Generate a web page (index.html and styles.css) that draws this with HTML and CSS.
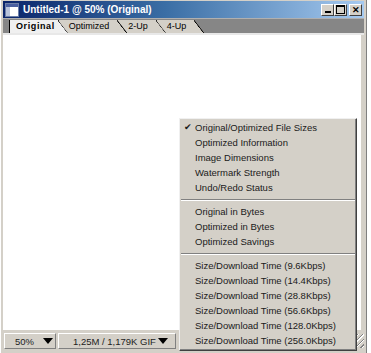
FILE: index.html
```html
<!DOCTYPE html>
<html lang="en">
<head>
    <meta charset="UTF-8">
    <title>Untitled-1 @ 50% (Original)</title>
    <link rel="stylesheet" href="styles.css">
</head>
<body>
    <div class="window">
        <div class="titlebar">
            <svg class="doc-icon" width="14" height="14" viewBox="0 0 14 14">
                <rect x="0.5" y="0.5" width="13" height="13" fill="#fff" stroke="#6d7fa8"/>
                <rect x="1" y="1" width="12" height="3" fill="#4a5fa0"/>
                <rect x="1" y="4" width="4" height="9" fill="#b9c4dc"/>
            </svg>
            <span class="title">Untitled-1 @ 50% (Original)</span>
            <div class="caption-buttons">
                <button class="cap-btn"><span class="min"></span></button>
                <button class="cap-btn"><span class="max"></span></button>
                <button class="cap-btn close">&#x2715;</button>
            </div>
        </div>
        <div class="tabs">
            <div class="tab active">Original</div>
            <div class="tab t2">Optimized</div>
            <div class="tab t3">2-Up</div>
            <div class="tab t4">4-Up</div>
        </div>
        <div class="canvas"></div>
        <div class="statusbar">
            <div class="field zoom">50% <span class="arrow"></span></div>
            <div class="field size">1,25M / 1,179K GIF <span class="arrow"></span></div>
            <div class="grip"></div>
        </div>
    </div>

    <div class="menu">
        <div class="item checked">Original/Optimized File Sizes</div>
        <div class="item">Optimized Information</div>
        <div class="item">Image Dimensions</div>
        <div class="item">Watermark Strength</div>
        <div class="item">Undo/Redo Status</div>
        <div class="sep"></div>
        <div class="item">Original in Bytes</div>
        <div class="item">Optimized in Bytes</div>
        <div class="item">Optimized Savings</div>
        <div class="sep"></div>
        <div class="item">Size/Download Time (9.6Kbps)</div>
        <div class="item">Size/Download Time (14.4Kbps)</div>
        <div class="item">Size/Download Time (28.8Kbps)</div>
        <div class="item">Size/Download Time (56.6Kbps)</div>
        <div class="item">Size/Download Time (128.0Kbps)</div>
        <div class="item">Size/Download Time (256.0Kbps)</div>
    </div>
</body>
</html>
```
FILE: styles.css
```css
body {
    margin: 0;
    font-family: "Liberation Sans", Arial, sans-serif;
    font-size: 9px;
    background: #fff;
    width: 371px;
    height: 353px;
    overflow: hidden;
}
.window {
    width: 367px;
    height: 353px;
    box-sizing: border-box;
    background: #d4d0c8;
    border-left: 1px solid #fff;
    border-right: 1px solid #808080;
    padding: 1px 2px 0 2px;
    display: flex;
    flex-direction: column;
}
.titlebar {
    height: 17px;
    flex: none;
    display: flex;
    align-items: center;
    background: linear-gradient(to right, #0a246a 0%, #3a6ea5 45%, #a6caf0 100%);
    padding: 0 2px 0 2px;
}
.doc-icon {
    flex: none;
    margin-right: 4px;
}
.title {
    color: #fff;
    font-weight: bold;
    font-size: 10px;
    flex: 1;
}
.caption-buttons {
    display: flex;
}
.cap-btn {
    width: 13px;
    height: 12px;
    padding: 0;
    background: #d4d0c8;
    border: 1px solid;
    border-color: #fff #404040 #404040 #fff;
    font-size: 9px;
    font-weight: bold;
    line-height: 10px;
    color: #000;
    display: flex;
    align-items: flex-end;
    justify-content: center;
}
.cap-btn.close {
    margin-left: 2px;
    align-items: center;
}
.min {
    width: 6px;
    height: 2px;
    background: #000;
    margin-bottom: 2px;
}
.max {
    width: 7px;
    height: 6px;
    border: 1px solid #000;
    border-top-width: 2px;
    margin-bottom: 1px;
}
.tabs {
    height: 14px;
    flex: none;
    display: flex;
    align-items: flex-end;
    background: #868686;
    border-top: 1px solid #b0b0b0;
    padding-left: 6px;
    border-bottom: 2px solid #e8e8e8;
}
.tab {
    position: relative;
    height: 13px;
    line-height: 13px;
    padding: 0 18px 0 10px;
    margin-right: -10px;
    background:
        linear-gradient(to top right, transparent calc(50% - 0.8px), #000 calc(50% - 0.4px), #000 calc(50% + 0.4px), transparent calc(50% + 0.8px)) right top / 10px 100% no-repeat,
        #d4d0c8;
    color: #000;
    font-size: 9px;
    clip-path: polygon(0 0, calc(100% - 10px) 0, 100% 100%, 0 100%);
    border-left: 1px solid #000;
}
.tab.active {
    font-weight: bold;
    background:
        linear-gradient(to top right, transparent calc(50% - 0.8px), #000 calc(50% - 0.4px), #000 calc(50% + 0.4px), transparent calc(50% + 0.8px)) right top / 10px 100% no-repeat,
        #f0f0f0;
    z-index: 4;
    letter-spacing: 0.6px;
    padding: 0 13px 0 6px;
}
.t2 { z-index: 3; }
.t3 { z-index: 2; }
.t4 { z-index: 1; }
.canvas {
    flex: 1;
    background: #fff;
    border-right: 3px solid #d4d0c8;
}
.statusbar {
    height: 20px;
    flex: none;
    display: flex;
    align-items: center;
    padding: 1px 0 2px 1px;
    gap: 2px;
}
.field {
    height: 16px;
    box-sizing: border-box;
    border: 1px solid;
    border-color: #fff #808080 #808080 #fff;
    display: flex;
    align-items: center;
    justify-content: space-between;
    font-size: 9.5px;
    color: #222;
    white-space: nowrap;
}
.zoom {
    width: 52px;
    padding: 0 2px 0 10px;
}
.size {
    width: 118px;
    padding: 0 7px 0 14px;
}
.arrow {
    width: 0;
    height: 0;
    border-left: 5px solid transparent;
    border-right: 5px solid transparent;
    border-top: 6px solid #000;
}
.grip {
    margin-left: auto;
    width: 10px;
    height: 14px;
    background: repeating-linear-gradient(135deg, #d4d0c8 0 2px, #808080 2px 3px, #fff 3px 4px);
}
.menu {
    position: absolute;
    left: 179px;
    top: 118px;
    width: 178px;
    height: 233px;
    box-sizing: border-box;
    background: #d4d0c8;
    border: 1px solid;
    border-color: #f0f0f0 #404040 #404040 #f0f0f0;
    box-shadow: inset -1px -1px 0 #808080;
    padding: 1px 0;
}
.item {
    height: 15px;
    line-height: 15px;
    padding-left: 15px;
    color: #1a1a1a;
    font-size: 9.5px;
    white-space: nowrap;
    position: relative;
}
.item.checked::before {
    content: "\2714";
    position: absolute;
    left: 4px;
    font-size: 9px;
}
.sep {
    height: 2px;
    margin: 4px 1px 3px 1px;
    border-top: 1px solid #808080;
    border-bottom: 1px solid #fff;
    box-sizing: border-box;
}
```
